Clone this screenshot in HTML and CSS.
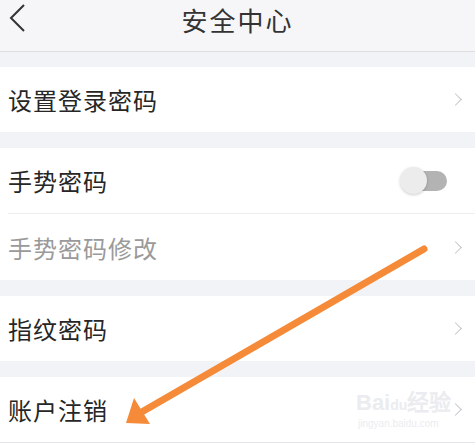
FILE: index.html
```html
<!DOCTYPE html>
<html lang="zh-CN">

<head>
    <meta charset="UTF-8">
    <meta name="viewport" content="width=device-width, initial-scale=1.0">
    <title>安全中心</title>
    <link rel="stylesheet" href="styles.css">
</head>

<body>
    <div class="page">
        <div class="header">
            <svg class="back" width="20" height="30" viewBox="0 0 20 30">
                <polyline points="16,2 3,15 16,28" fill="none" stroke="#333" stroke-width="2" />
            </svg>
            <h1>安全中心</h1>
        </div>

        <div class="group first">
            <div class="row">
                <span class="label">设置登录密码</span>
                <span class="chevron"></span>
            </div>
        </div>

        <div class="group">
            <div class="row">
                <span class="label">手势密码</span>
                <span class="switch"><span class="knob"></span></span>
            </div>
            <div class="row muted">
                <span class="label">手势密码修改</span>
                <span class="chevron"></span>
            </div>
        </div>

        <div class="group">
            <div class="row">
                <span class="label">指纹密码</span>
                <span class="chevron"></span>
            </div>
        </div>

        <div class="group last">
            <div class="row">
                <span class="label">账户注销</span>
                <span class="chevron"></span>
            </div>
        </div>

        <!-- watermark + annotation arrow sit over the list -->
        <div class="watermark">
            <div class="wm-logo">Bai<span class="du">du</span>经验</div>
            <div class="wm-url">jingyan.baidu.com</div>
        </div>
        <svg class="arrow" width="475" height="443" viewBox="0 0 475 443">
            <line x1="424" y1="249" x2="140" y2="413" stroke="#f58b38" stroke-width="7" stroke-linecap="round" />
            <polygon points="126,423 134,398 150,424" fill="#f58b38" />
        </svg>
    </div>
</body>

</html>
```

FILE: styles.css
```css
body {
    margin: 0;
    font-family: "Noto Sans CJK SC", "Noto Sans", sans-serif;
    background-color: #f2f3f7;
}

.page {
    position: relative;
    width: 475px;
    height: 443px;
    overflow: hidden;
}

.header {
    height: 51px;
    background-color: #f6f6f8;
    border-bottom: 1px solid #dcdde1;
    display: flex;
    align-items: center;
    justify-content: center;
    position: relative;
}

.header h1 {
    margin: 0;
    font-size: 26px;
    font-weight: 400;
    letter-spacing: 2px;
    color: #333;
    line-height: 1;
    margin-top: -12px;
}

.back {
    position: absolute;
    left: 8px;
    top: 3px;
}

.group {
    margin-top: 16px;
    background-color: #fff;
}

.group.first {
    margin-top: 15px;
}

.group.last {
    border-bottom: 1px solid #e3e5ea;
}

.row {
    height: 65px;
    display: flex;
    align-items: center;
    justify-content: space-between;
    padding: 0 13px 0 8px;
}

.row + .row {
    border-top: 1px solid #eeeef1;
    height: 66px;
    margin-left: 8px;
    padding-left: 0;
}

.label {
    font-size: 24px;
    color: #262626;
    letter-spacing: 1px;
}

.muted .label {
    color: #9a9a9a;
}

.chevron {
    width: 8px;
    height: 8px;
    border-top: 1.5px solid #c6c6ca;
    border-right: 1.5px solid #c6c6ca;
    transform: rotate(45deg);
    margin-right: 2px;
}

.switch {
    width: 37px;
    height: 20px;
    border-radius: 10px;
    background-color: #b3b3b3;
    position: relative;
    margin-right: 15px;
}

.knob {
    position: absolute;
    left: -10px;
    top: -4px;
    width: 27px;
    height: 27px;
    border-radius: 50%;
    background-color: #ececec;
    box-shadow: 0 1px 3px rgba(0, 0, 0, 0.2);
}

.watermark {
    position: absolute;
    left: 356px;
    top: 390px;
    color: #ebecef;
    font-family: "Liberation Sans", sans-serif;
}

.wm-logo {
    font-size: 22px;
    font-weight: 700;
    line-height: 26px;
}

.wm-logo .du {
    font-size: 14px;
}

.wm-url {
    font-size: 10px;
    line-height: 12px;
    margin-left: 2px;
}

.arrow {
    position: absolute;
    left: 0;
    top: 0;
}
```
